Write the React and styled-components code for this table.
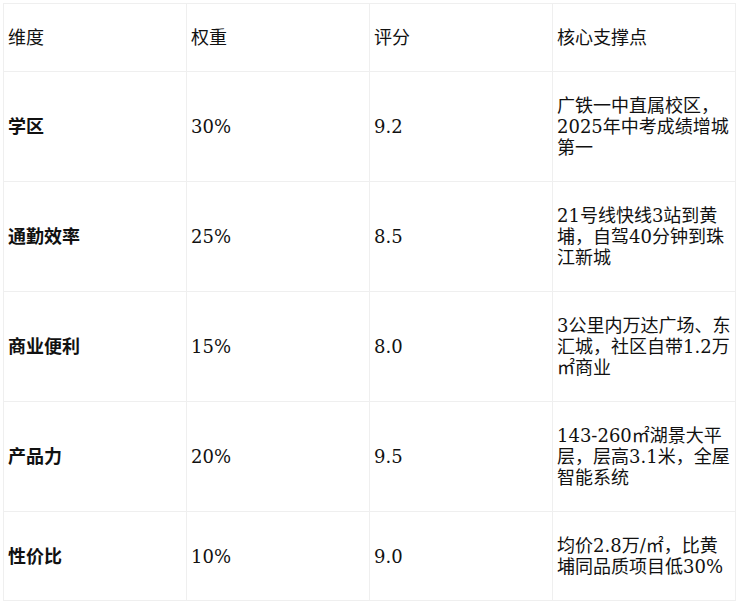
import React from 'react';
import styled, { createGlobalStyle } from 'styled-components';

const GlobalStyle = createGlobalStyle`
  body {
    margin: 0;
    background: #ffffff;
    font-family: "DejaVu Serif", "Noto Sans CJK SC", serif;
    color: #111111;
  }
`;

const Page = styled.div`
  padding: 3px;
`;

const Table = styled.table`
  width: 733px;
  table-layout: fixed;
  border-collapse: collapse;
  font-size: 18px;
  line-height: 21px;
`;

const HeadCell = styled.th`
  border: 1px solid #efefef;
  padding: 23px 4px;
  text-align: left;
  font-weight: normal;
  vertical-align: middle;
`;

const Cell = styled.td`
  border: 1px solid #efefef;
  padding: 23px 4px;
  vertical-align: middle;
  font-weight: ${(p) => (p.$strong ? 'bold' : 'normal')};
`;

const rows = [
  { name: '学区', weight: '30%', score: '9.2', note: '广铁一中直属校区，2025年中考成绩增城第一' },
  { name: '通勤效率', weight: '25%', score: '8.5', note: '21号线快线3站到黄埔，自驾40分钟到珠江新城' },
  { name: '商业便利', weight: '15%', score: '8.0', note: '3公里内万达广场、东汇城，社区自带1.2万㎡商业' },
  { name: '产品力', weight: '20%', score: '9.5', note: '143-260㎡湖景大平层，层高3.1米，全屋智能系统' },
  { name: '性价比', weight: '10%', score: '9.0', note: '均价2.8万/㎡，比黄埔同品质项目低30%' },
];

const App = () => {
  return (
    <Page>
      <GlobalStyle />
      <Table>
        <thead>
          <tr>
            <HeadCell>维度</HeadCell>
            <HeadCell>权重</HeadCell>
            <HeadCell>评分</HeadCell>
            <HeadCell>核心支撑点</HeadCell>
          </tr>
        </thead>
        <tbody>
          {rows.map((row) => (
            <tr key={row.name}>
              <Cell $strong>{row.name}</Cell>
              <Cell>{row.weight}</Cell>
              <Cell>{row.score}</Cell>
              <Cell>{row.note}</Cell>
            </tr>
          ))}
        </tbody>
      </Table>
    </Page>
  );
};

export default App;
